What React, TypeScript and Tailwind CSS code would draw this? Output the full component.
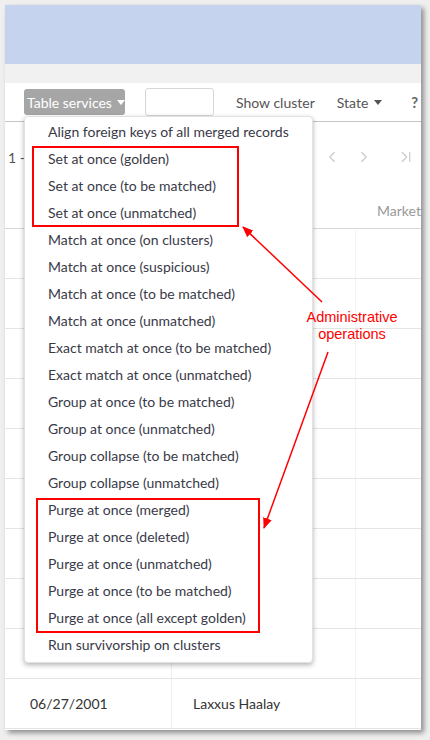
import { ChevronLeft, ChevronRight, ChevronLast } from "lucide-react";

const items = [
  "Align foreign keys of all merged records",
  "Set at once (golden)",
  "Set at once (to be matched)",
  "Set at once (unmatched)",
  "Match at once (on clusters)",
  "Match at once (suspicious)",
  "Match at once (to be matched)",
  "Match at once (unmatched)",
  "Exact match at once (to be matched)",
  "Exact match at once (unmatched)",
  "Group at once (to be matched)",
  "Group at once (unmatched)",
  "Group collapse (to be matched)",
  "Group collapse (unmatched)",
  "Purge at once (merged)",
  "Purge at once (deleted)",
  "Purge at once (unmatched)",
  "Purge at once (to be matched)",
  "Purge at once (all except golden)",
  "Run survivorship on clusters",
];

function Row({ date, name }: { date?: string; name?: string }) {
  return (
    <div className="grid grid-cols-[167px_184px_1fr] h-[50px] border-b border-[#e4e4e4]">
      <div className="border-r border-[#efefef] flex items-center pl-[25px] text-[14px] text-[#333]">{date}</div>
      <div className="border-r border-[#f4f4f4] flex items-center pl-[21px] text-[14px] text-[#333]">{name}</div>
      <div />
    </div>
  );
}

export default function App() {
  return (
    <div
      className="w-[430px] h-[740px] bg-[#efefef] pt-[5px] pl-[5px]"
      style={{ fontFamily: "Lato, 'Noto Sans', sans-serif" }}
    >
      <div className="relative w-[416px] h-[725px] bg-white overflow-hidden shadow-[3px_3px_5px_rgba(0,0,0,0.4)]">
        <div className="h-[59px] bg-[#c5d3ee]" />
        <div className="h-[19px] bg-[#f1f1f1]" />
        {/* toolbar */}
        <div className="h-[39px] flex items-center border-b border-[#c4c4c4] pl-[19px] whitespace-nowrap">
          <div className="w-[101px] h-[26px] rounded-[3px] bg-[#a6a6a6] text-white text-[14px] flex items-center pl-[3px] gap-[5px]">
            <span>Table services</span>
            <span className="w-0 h-0 border-l-[4px] border-r-[4px] border-t-[5px] border-l-transparent border-r-transparent border-t-white" />
          </div>
          <div className="ml-[20px] w-[69px] h-[28px] rounded-[3px] border border-[#d6d6d6] bg-white" />
          <span className="ml-[22px] text-[14px] text-[#555]">Show cluster</span>
          <span className="ml-[22px] text-[14px] text-[#555] flex items-center gap-[6px]">
            State
            <span className="w-0 h-0 border-l-[4px] border-r-[4px] border-t-[5px] border-l-transparent border-r-transparent border-t-[#555]" />
          </span>
          <span className="ml-[29px] text-[15px] font-bold text-[#666]">?</span>
        </div>
        {/* pagination */}
        <div className="h-[70px] flex items-center pl-[3px] pr-[6px] text-[14px] text-[#555]">
          <span>1 -</span>
          <div className="ml-auto flex items-center text-[#c8c8c8]">
            <ChevronLeft size={18} strokeWidth={1.5} />
            <ChevronRight size={18} strokeWidth={1.5} className="ml-[14px]" />
            <ChevronLast size={18} strokeWidth={1.5} className="ml-[24px]" />
          </div>
        </div>
        {/* header */}
        <div className="h-[37px] flex items-center border-b border-[#d8d8d8] pl-[372px] text-[14px] text-[#999] whitespace-nowrap">
          Market
        </div>
        {Array.from({ length: 9 }).map((_, i) => (
          <Row key={i} />
        ))}
        <Row date="06/27/2001" name="Laxxus Haalay" />

        {/* dropdown menu */}
        <div className="absolute left-[19px] top-[111px] w-[289px] pt-[1px] pb-[4px] bg-white rounded-[4px] border border-[#e2e2e2] shadow-[0_2px_5px_rgba(0,0,0,0.3)]">
          {items.map((t) => (
            <div key={t} className="h-[27px] flex items-center pl-[23px] text-[14px] text-[#393a48] whitespace-nowrap">
              {t}
            </div>
          ))}
        </div>

        {/* annotation boxes */}
        <div className="absolute left-[27px] top-[141px] w-[207px] h-[81px] border-2 border-[#f00]" />
        <div className="absolute left-[31px] top-[493px] w-[224px] h-[135px] border-2 border-[#f00]" />
        <svg className="absolute left-0 top-0 pointer-events-none" width="416" height="725">
          <defs>
            <marker id="ah" markerUnits="userSpaceOnUse" markerWidth="11" markerHeight="9" refX="10" refY="4.5" orient="auto">
              <path d="M0,0 L11,4.5 L0,9 z" fill="#f00" />
            </marker>
          </defs>
          <line x1="317" y1="297" x2="238" y2="222" stroke="#f00" strokeWidth="1.5" markerEnd="url(#ah)" />
          <line x1="323" y1="347" x2="259" y2="523" stroke="#f00" strokeWidth="1.5" markerEnd="url(#ah)" />
        </svg>
        <div
          className="absolute left-[297px] top-[304px] w-[100px] text-center text-[14.5px] leading-[17px] text-[#f00]"
          style={{ fontFamily: "'Liberation Sans', Arial, sans-serif" }}
        >
          Administrative
          <br />
          operations
        </div>
      </div>
    </div>
  );
}
